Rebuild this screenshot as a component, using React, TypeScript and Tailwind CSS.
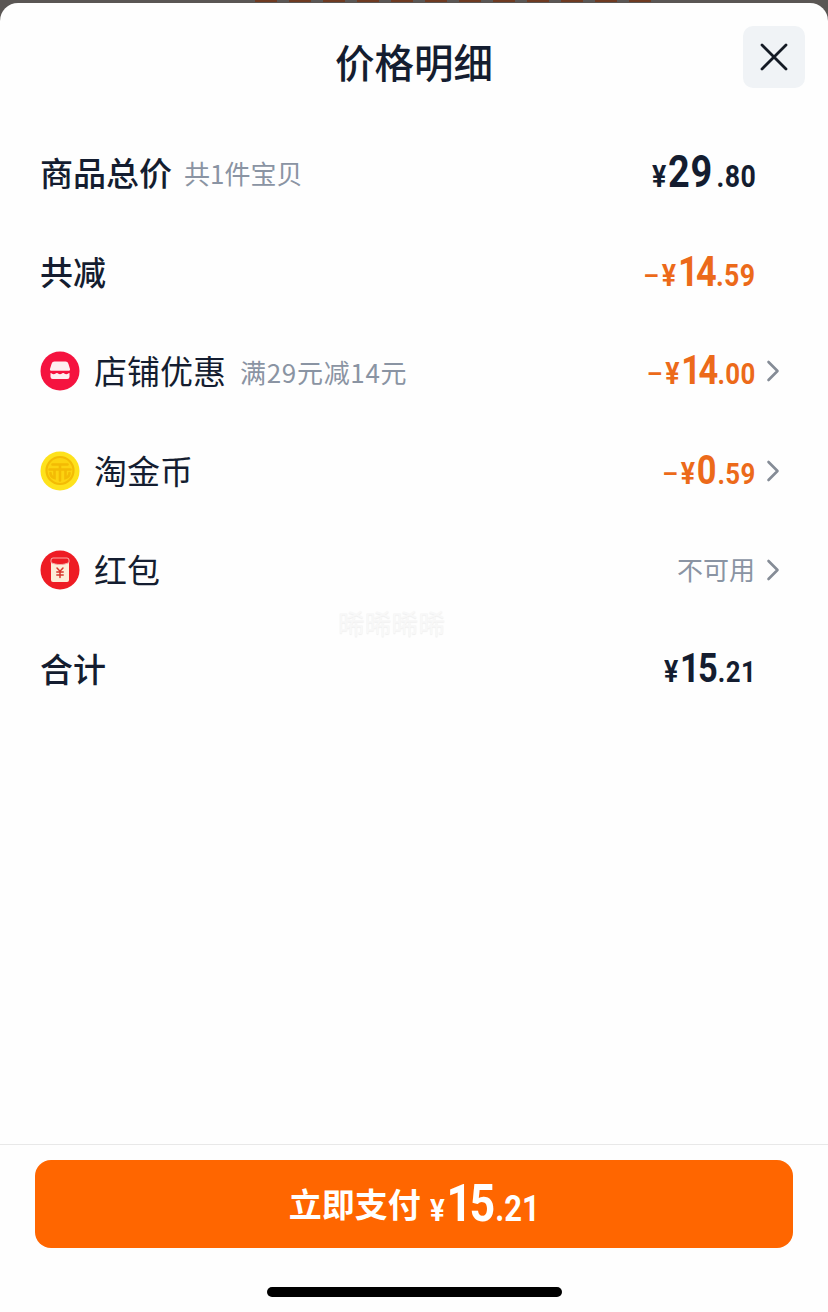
import React from "react";

const CJK = "font-['Noto_Sans_CJK_SC','Noto_Sans',sans-serif]";
const NUM = "font-['Roboto','Liberation_Sans',sans-serif]";

function Price({
  prefix = false,
  main,
  cents,
  color,
  big,
  small = "text-[31px]",
  track = "tracking-[-1px]",
  lift = "",
  dot = "ml-[2px]",
}: {
  prefix?: boolean;
  main: string;
  cents: string;
  color: string;
  big: string;
  small?: string;
  track?: string;
  lift?: string;
  dot?: string;
}) {
  return (
    <span className={`-mr-[1px] inline-block origin-right scale-x-[0.86] whitespace-nowrap font-bold leading-none ${NUM} ${lift} ${color}`}>
      {prefix && <span className="mr-[3px] text-[29px] font-medium">–</span>}
      <span className="mr-[2px] text-[31px]">¥</span>
      <span className={`${big} ${track}`}>{main}</span>
      <span className={`${small} ${dot} tracking-[0.500px]`}>.{cents}</span>
    </span>
  );
}

function Chevron() {
  return (
    <svg width="14" height="22" viewBox="0 0 14 22" fill="none" className="shrink-0">
      <path d="M2.500 2 L11.500 11 L2.500 20" stroke="#858c96" strokeWidth="2.600" strokeLinecap="round" strokeLinejoin="round" />
    </svg>
  );
}

function ShopIcon() {
  return (
    <svg width="40" height="40" viewBox="0 0 40 40" className="shrink-0">
      <circle cx="20" cy="20" r="19.500" fill="#f5133f" />
      <path d="M14.500 10.500h11a3 3 0 0 1 2.900 2.200l1.600 5.300c.3 1-.4 1.800-1.400 1.800H11.400c-1 0-1.700-.8-1.400-1.800l1.600-5.300a3 3 0 0 1 2.900-2.200Z" fill="#feeef0" />
      <path d="M10.500 22c1.600 0 1.600 1.300 3.200 1.300s1.600-1.300 3.200-1.300 1.500 1.300 3.100 1.300 1.600-1.300 3.100-1.300 1.600 1.300 3.200 1.300 1.600-1.300 3.200-1.300v3.800a2.200 2.200 0 0 1-2.200 2.200H12.700a2.200 2.200 0 0 1-2.200-2.200Z" fill="#feeef0" />
    </svg>
  );
}

function CoinIcon() {
  return (
    <svg width="40" height="40" viewBox="0 0 40 40" className="shrink-0">
      <circle cx="20" cy="20" r="19.500" fill="#fee21c" />
      <circle cx="20" cy="19.500" r="13.500" fill="#fcd310" stroke="#f3bb05" strokeWidth="2.200" />
      <path d="M12.500 13.500h15M9.500 18.500h21M14.500 18.500v8.500c-2.500-.8-4-2.600-4-5M20 13.500v16M25.500 18.500v8.500c2.500-.8 4-2.600 4-5" fill="none" stroke="#f3bb05" strokeWidth="2.600" strokeLinecap="round" />
    </svg>
  );
}

function PacketIcon() {
  return (
    <svg width="40" height="40" viewBox="0 0 40 40" className="shrink-0">
      <circle cx="20" cy="20" r="19.500" fill="#ee1c24" />
      <path d="M11 10a2 2 0 0 1 2-2h14a2 2 0 0 1 2 2v20a2 2 0 0 1-2 2H13a2 2 0 0 1-2-2Z" fill="#fdecd8" />
      <path d="M11 10a2 2 0 0 1 2-2h14a2 2 0 0 1 2 2v2.500c-5 2.700-13 2.700-18 0Z" fill="#ee1c24" stroke="#f9a9a4" strokeWidth="1" />
      <path d="M17 18l3 3.200 3-3.200M16.800 22h6.400M16.800 25h6.400M20 21.500v6" fill="none" stroke="#d8352c" strokeWidth="1.500" strokeLinecap="round" />
    </svg>
  );
}

function Row({ children }: { children: React.ReactNode }) {
  return <div className="flex h-[99.300px] items-center justify-between pl-10 pr-[48px]">{children}</div>;
}

function Right({ children, chevron = true }: { children: React.ReactNode; chevron?: boolean }) {
  return (
    <div className="flex items-center gap-[11px]">
      {children}
      {chevron ? <Chevron /> : <div className="w-[14px]" />}
    </div>
  );
}

const ORANGE = "text-[#ec6a1a]";
const INK = "text-[#141d30]";
const LABEL = `text-[33px] ${INK}`;
const SUB = "text-[#8a94a3]";

export default function App() {
  return (
    <div className={`relative flex h-[1312px] w-[828px] flex-col overflow-hidden bg-[#5a5654] pt-[3px] ${CJK}`}>
      <div className="absolute left-[255px] top-0 h-[2px] w-[405px] bg-[repeating-linear-gradient(90deg,#6e3a22_0px,#6e3a22_22px,#5a5654_22px,#5a5654_34px)]" />
      <div className="relative flex min-h-0 flex-1 flex-col rounded-t-[18px] bg-[#fefefe]">
        <header className="grid h-[120px] shrink-0 grid-cols-[1fr_auto_1fr] items-start px-[23px] pt-[23px]">
          <div />
          <h1 className={`mt-[7px] text-[39.500px] font-medium leading-[55px] ${INK}`}>价格明细</h1>
          <button className="flex h-[62px] w-[62px] items-center justify-center justify-self-end rounded-[10px] bg-[#f0f3f6]">
            <svg width="30" height="30" viewBox="0 0 30 30" fill="none">
              <path d="M3 3 L27 27 M27 3 L3 27" stroke="#141a24" strokeWidth="2.800" strokeLinecap="round" />
            </svg>
          </button>
        </header>

        <main className="relative min-h-0 flex-1">
          <Row>
            <div className="flex items-center gap-[12px]">
              <span className={`${LABEL} font-medium`}>商品总价</span>
              <span className={`text-[26px] ${SUB}`}>共1件宝贝</span>
            </div>
            <Right chevron={false}>
              <Price main="29" cents="80" color={INK} big="text-[44px]" track="tracking-[1px]" lift="mb-[2px]" dot="ml-[4px]" />
            </Right>
          </Row>
          <Row>
            <span className={`${LABEL} font-medium`}>共减</span>
            <Right chevron={false}>
              <Price prefix main="14" cents="59" color={ORANGE} big="text-[42px]" track="tracking-[-3px]" />
            </Right>
          </Row>
          <Row>
            <div className="flex items-center gap-[14px]">
              <ShopIcon />
              <span className={LABEL}>店铺优惠</span>
              <span className={`text-[26px] tracking-[0.700px] ${SUB}`}>满29元减14元</span>
            </div>
            <Right>
              <Price prefix main="14" cents="00" color={ORANGE} big="text-[40px]" small="text-[30px]" track="tracking-[-3px]" />
            </Right>
          </Row>
          <Row>
            <div className="flex items-center gap-[14px]">
              <CoinIcon />
              <span className={LABEL}>淘金币</span>
            </div>
            <Right>
              <Price prefix main="0" cents="59" color={ORANGE} big="text-[40px]" small="text-[30px]" />
            </Right>
          </Row>
          <Row>
            <div className="flex items-center gap-[14px]">
              <PacketIcon />
              <span className={LABEL}>红包</span>
            </div>
            <Right>
              <span className={`mb-[3px] text-[26px] ${SUB}`}>不可用</span>
            </Right>
          </Row>
          <Row>
            <span className={`${LABEL} font-medium`}>合计</span>
            <Right chevron={false}>
              <Price main="15" cents="21" color={INK} big="text-[40px]" small="text-[30px]" track="tracking-[-2px]" />
            </Right>
          </Row>
          <span className="absolute left-[338px] top-[487px] text-[26.800px] leading-none text-[#f8f8f8] [text-shadow:0_1px_1px_#efefef]">晞晞晞晞</span>
        </main>

        <footer className="flex h-[168px] shrink-0 flex-col items-center border-t border-[#e8e8e8] px-[35px] pt-[15px]">
          <button className="flex h-[88px] w-full items-center justify-center gap-[9px] rounded-[16px] bg-[#ff6600] text-white">
            <span className="mb-[1px] text-[33px] font-semibold">立即支付</span>
            <span className={`-mr-[18px] inline-block origin-left scale-x-[0.86] whitespace-nowrap font-bold leading-none ${NUM}`}>
              <span className="mr-[2px] text-[32px]">¥</span>
              <span className="text-[52px] tracking-[-3px]">15</span>
              <span className="ml-[3px] text-[36px]">.21</span>
            </span>
          </button>
          <div className="mt-[39px] h-[10px] w-[295px] rounded-full bg-black" />
        </footer>
      </div>
    </div>
  );
}
